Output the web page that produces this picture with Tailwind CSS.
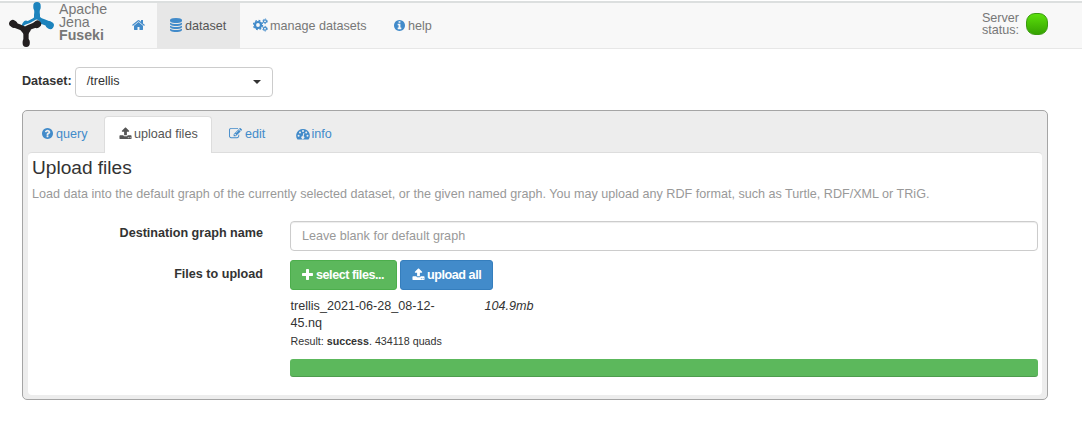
<!DOCTYPE html>
<html lang="en">
<head>
<meta charset="utf-8">
<title>Apache Jena Fuseki</title>
<script src="https://cdn.jsdelivr.net/npm/@tailwindcss/browser@4"></script>
</head>
<body class="h-[423px] overflow-hidden bg-white font-['Liberation_Sans',Arial,sans-serif] text-[12.6px] leading-[18px] text-[#333]">
<svg class="hidden">
  <symbol id="home" viewBox="64 128 1664 1536"><path d="M1472 992v480q0 26-19 45t-45 19h-384v-384h-256v384h-384q-26 0-45-19t-19-45v-480q0-1 .5-3t.5-3l575-474 575 474q1 2 1 6zm223-69l-62 74q-8 9-21 11h-3q-13 0-21-7l-692-577-692 577q-12 8-24 7-13-2-21-11l-62-74q-8-10-7-23.500t11-21.500l719-599q32-26 76-26t76 26l244 204v-195q0-14 9-23t23-9h192q14 0 23 9t9 23v408l219 182q10 8 11 21.500t-7 23.500z"/></symbol>
  <symbol id="database" viewBox="128 0 1536 1792"><path d="M896 768q237 0 443-43t325-127v170q0 69-103 128t-280 93.500-385 34.500-385-34.500-280-93.500-103-128v-170q119 84 325 127t443 43zm0 768q237 0 443-43t325-127v170q0 69-103 128t-280 93.500-385 34.500-385-34.500-280-93.500-103-128v-170q119 84 325 127t443 43zm0-384q237 0 443-43t325-127v170q0 69-103 128t-280 93.500-385 34.500-385-34.500-280-93.500-103-128v-170q119 84 325 127t443 43zm0-1152q208 0 385 34.500t280 93.500 103 128v128q0 69-103 128t-280 93.500-385 34.500-385-34.500-280-93.500-103-128v-128q0-69 103-128t280-93.500 385-34.500z"/></symbol>
  <symbol id="cogs" viewBox="0 0 15 14"><g fill="none" stroke="currentColor"><circle cx="5" cy="7" r="3" stroke-width="2.200"/><circle cx="5" cy="7" r="4.500" stroke-width="1.400" stroke-dasharray="1.770"/><circle cx="12" cy="3.300" r="1.500" stroke-width="1.200"/><circle cx="12" cy="3.300" r="2.400" stroke-width=".8" stroke-dasharray="1.260"/><circle cx="12" cy="10.700" r="1.500" stroke-width="1.200"/><circle cx="12" cy="10.700" r="2.400" stroke-width=".8" stroke-dasharray="1.260"/></g></symbol>
  <symbol id="info" viewBox="128 128 1536 1536"><path d="M1152 1376v-160q0-14-9-23t-23-9h-96v-512q0-14-9-23t-23-9h-320q-14 0-23 9t-9 23v160q0 14 9 23t23 9h96v320h-96q-14 0-23 9t-9 23v160q0 14 9 23t23 9h448q14 0 23-9t9-23zm-128-896v-160q0-14-9-23t-23-9h-192q-14 0-23 9t-9 23v160q0 14 9 23t23 9h192q14 0 23-9t9-23zm640 416q0 209-103 385.500t-279.500 279.500-385.500 103-385.500-103-279.500-279.500-103-385.500 103-385.500 279.500-279.500 385.500-103 385.500 103 279.500 279.500 103 385.500z"/></symbol>
  <symbol id="question" viewBox="128 128 1536 1536"><path d="M1024 1376v-192q0-14-9-23t-23-9h-192q-14 0-23 9t-9 23v192q0 14 9 23t23 9h192q14 0 23-9t9-23zm256-672q0-88-55.500-163t-138.500-116-170-41q-243 0-371 213-15 24 8 42l132 100q7 6 19 6 16 0 25-12 53-68 86-92 34-24 86-24 48 0 85.500 26t37.500 59q0 38-20 61t-68 45q-63 28-115.500 86.500t-52.500 125.500v36q0 14 9 23t23 9h192q14 0 23-9t9-23q0-19 21.500-49.500t54.500-49.500q32-18 49-28.500t46-35 44.500-48 28-60.500 12.500-81zm384 192q0 209-103 385.500t-279.500 279.500-385.500 103-385.500-103-279.500-279.500-103-385.500 103-385.500 279.500-279.500 385.500-103 385.500 103 279.500 279.500 103 385.500z"/></symbol>
  <symbol id="upload" viewBox="0 0 1792 1792"><path d="M1344 1472q0-26-19-45t-45-19-45 19-19 45 19 45 45 19 45-19 19-45zm256 0q0-26-19-45t-45-19-45 19-19 45 19 45 45 19 45-19 19-45zm128-224v320q0 40-28 68t-68 28h-1472q-40 0-68-28t-28-68v-320q0-40 28-68t68-28h427q21 56 70.500 92t110.500 36h256q61 0 110.500-36t70.500-92h427q40 0 68 28t28 68zm-325-648q-17 40-59 40h-256v448q0 26-19 45t-45 19h-256q-26 0-45-19t-19-45v-448h-256q-42 0-59-40-17-39 14-69l448-448q18-19 45-19t45 19l448 448q31 30 14 69z"/></symbol>
  <symbol id="plus" viewBox="192 0 1408 1792"><path d="M1600 736v192q0 40-28 68t-68 28h-416v416q0 40-28 68t-68 28h-192q-40 0-68-28t-28-68v-416h-416q-40 0-68-28t-28-68v-192q0-40 28-68t68-28h416v-416q0-40 28-68t68-28h192q40 0 68 28t28 68v416h416q40 0 68 28t28 68z"/></symbol>
  <symbol id="edit" viewBox="0 0 1792 1792"><path d="M888 1184l116-116-152-152-116 116v56h96v96h56zm440-720q-16-16-33 1l-350 350q-17 17-1 33t33-1l350-350q17-17 1-33zm80 594v190q0 119-84.500 203.500t-203.500 84.500h-832q-119 0-203.500-84.500t-84.500-203.500v-832q0-119 84.500-203.500t203.500-84.500h832q63 0 117 25 15 7 18 23 3 17-9 29l-49 49q-14 14-32 8-23-6-45-6h-832q-66 0-113 47t-47 113v832q0 66 47 113t113 47h832q66 0 113-47t47-113v-126q0-13 9-22l64-64q15-15 35-7t20 29zm-96-738l288 288-672 672h-288v-288zm444 132l-92 92-288-288 92-92q28-28 68-28t68 28l152 152q28 28 28 68t-28 68z"/></symbol>
  <symbol id="gauge" viewBox="0 0 14 14"><path fill-rule="evenodd" d="M1.500 12.500A6.600 6.600 0 0 1 7 2a6.600 6.600 0 0 1 5.500 10.500zM2.600 7.700a1 1 0 1 0 0 2 1 1 0 0 0 0-2zM4 4.500a1 1 0 1 0 0 2 1 1 0 0 0 0-2zM7 3a1 1 0 1 0 0 2 1 1 0 0 0 0-2zM10.200 4.500a1 1 0 1 0 0 2 1 1 0 0 0 0-2zM11.500 7.700a1 1 0 1 0 0 2 1 1 0 0 0 0-2zM7.400 6l-.8 3a1.500 1.500 0 1 0 1 .2l.8-3z"/></symbol>
</svg>

<nav class="mt-px flex h-12 border-t-2 border-b border-t-[#dcdfdf] border-b-[#e7e7e7] bg-[#f8f8f8] text-[#777]">
  <svg class="ml-2 -mt-[3px] h-12 w-12 shrink-0" viewBox="8 0 48 48">
    <g fill="none" stroke="#1c83bd" stroke-linecap="round" stroke-linejoin="round">
      <path stroke-width="5.500" d="M37 6.500V18M36.500 18.500c-2 3.500-6 3-10 6.500M38 18.500c2 3.500 8 3 12 6.500"/>
      <path stroke-width="7.400" d="M37 5.800v1.700M49.500 25l.6.400M26.200 24.500l-.5.800"/>
      <path stroke-width="6" d="M37 15.500v5M34 21.500l5.500 0"/>
    </g>
    <path fill="none" stroke="#f8f8f8" stroke-width="7.400" stroke-linecap="round" d="M27 28c3-1 6-2 9.500-4.500"/>
    <g fill="none" stroke="#231f20" stroke-linecap="round" stroke-linejoin="round">
      <path stroke-width="5.300" d="M13 23.500c4 4 9 3 12.500 6.500 2-3.500 7-3 11.500-6M26 30v12"/>
      <path stroke-width="7.200" d="M12.800 23.500l.9.700M37.500 24l-.6.400M26.200 42v1.300"/>
      <path stroke-width="5.600" d="M23.500 29.500h4.500l-2 3z"/>
    </g>
  </svg>
  <div class="ml-[3px] h-[45px] w-[61px] text-[14.200px] leading-[13px]"><div>Apache</div><div>Jena</div><div class="font-bold">Fuseki</div></div>
  <a class="flex w-[37px] items-center pl-3 text-[#428bca]"><svg class="-mt-px h-[12px] w-[13px] fill-current"><use href="#home"/></svg></a>
  <a class="flex w-[83px] items-center gap-[3px] bg-[#e7e7e7] pl-[13px] text-[#555]"><svg class="-mt-px h-[14px] w-[12px] fill-[#428bca]"><use href="#database"/></svg>dataset</a>
  <a class="flex w-[141px] items-center gap-[2px] pl-[13px]"><svg class="-mt-px h-[14px] w-[15px] text-[#428bca]"><use href="#cogs"/></svg>manage datasets</a>
  <a class="flex items-center gap-[3px] pl-[13px]"><svg class="-mt-px size-[11px] fill-[#428bca]"><use href="#info"/></svg>help</a>
  <div class="mr-[34px] ml-auto flex items-center gap-[7px]">
    <div class="-mt-[3px] text-right leading-[12px]">Server<br>status:</div>
    <span class="-mt-[3px] size-[22px] rounded-[9px] border border-[#3b9c10] bg-linear-to-b from-[#5be00c] to-[#36a302]"></span>
  </div>
</nav>

<main class="px-[22px] pt-[18px]">
  <div class="flex h-[30px] items-center gap-[3px]">
    <label class="-mt-[3px] font-bold">Dataset:</label>
    <div class="flex h-[30px] w-[198px] items-center justify-between rounded border border-[#ccc] pr-[11px] pl-[11px]"><span class="-mt-[3px]">/trellis</span><span class="h-0 w-0 border-x-4 border-t-4 border-x-transparent border-t-[#333]"></span></div>
  </div>

  <section class="mt-[13px] flex h-[290px] w-[1026px] flex-col rounded-[5px] border border-[#a5a5a5] bg-[#ededed] px-[5px] pt-[5px] pb-1">
    <div class="z-10 -mb-px flex h-[37px] text-[#428bca]">
      <a class="flex w-[76px] items-center gap-[3px] pb-[2px] pl-[14px]"><svg class="size-[11px] fill-current"><use href="#question"/></svg>query</a>
      <a class="flex w-[108px] items-center gap-[2px] rounded-t border border-b-0 border-[#ddd] bg-white pb-[3px] pl-[14px] text-[#555]"><svg class="size-[13px] fill-current"><use href="#upload"/></svg>upload files</a>
      <a class="flex w-[68px] items-center gap-[3px] pb-[2px] pl-[17px]"><svg class="size-[13px] fill-current"><use href="#edit"/></svg>edit</a>
      <a class="flex items-center gap-[2px] pb-[2px] pl-[15.5px]"><svg class="size-[14px] fill-current"><use href="#gauge"/></svg>info</a>
    </div>
    <div class="flex-1 rounded border-t border-[#ddd] bg-white pr-[4px] pl-1">
      <h3 class="mt-[4px] text-[19.1px] leading-[21px]">Upload files</h3>
      <p class="mt-[7px] whitespace-nowrap text-[#999]">Load data into the default graph of the currently selected dataset, or the given named graph. You may upload any RDF format, such as Turtle, RDF/XML or TRiG.</p>
      <div class="mt-[18px] grid grid-cols-[231px_1fr] gap-x-[27px]">
        <label class="pt-[3px] text-right font-bold">Destination graph name</label>
        <div class="flex h-[30px] items-center rounded border border-[#ccc] px-[11px] text-[#999] shadow-[inset_0_1px_1px_rgba(0,0,0,0.075)]">Leave blank for default graph</div>
        <label class="pt-[14px] text-right font-bold">Files to upload</label>
        <div>
          <div class="mt-[9px] flex gap-[3px] font-bold tracking-[-0.45px] text-white">
            <button class="flex h-[30px] w-[107px] items-center gap-[3px] rounded-[3px] border border-[#4cae4c] bg-[#5cb85c] pl-[11px]"><svg class="-mt-px h-[14px] w-[11px] fill-current"><use href="#plus"/></svg>select files...</button>
            <button class="flex h-[30px] w-[93px] items-center gap-[2px] rounded-[3px] border border-[#357ebd] bg-[#428bca] pl-[11px]"><svg class="-mt-px size-[13px] fill-current"><use href="#upload"/></svg>upload all</button>
          </div>
          <div class="mt-2 flex pl-[0.5px] leading-[17px]"><div class="w-[194px]">trellis_2021-06-28_08-12-<br>45.nq</div><em>104.9mb</em></div>
          <div class="mt-px pl-[0.5px] text-[10.7px] leading-[16px]">Result: <b>success</b>. 434118 quads</div>
          <div class="mt-[10px] h-[18px] rounded-[3px] bg-[#5cb85c] shadow-[inset_0_-1px_0_rgba(0,0,0,0.15)]"></div>
        </div>
      </div>
    </div>
  </section>
</main>
</body>
</html>
